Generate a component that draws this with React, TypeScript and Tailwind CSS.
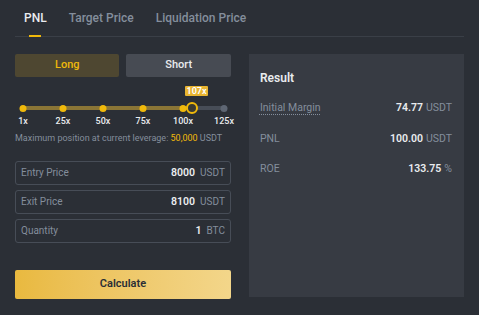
import React from "react";

const marks = [
  { x: 8, label: "1x" },
  { x: 48, label: "25x" },
  { x: 88, label: "50x" },
  { x: 128, label: "75x" },
  { x: 168, label: "100x" },
  { x: 209, label: "125x" },
];

function Field({ label, value, unit }: { label: string; value: string; unit: string }) {
  return (
    <div className="flex h-[24px] items-center rounded-[3px] border border-[#474d57] pl-[5px] pr-[5px] text-[10px]">
      <span className="flex-1 text-[#848e9c]">{label}</span>
      <span className="text-[10.5px] font-semibold text-[#eaecef]">{value}</span>
      <span className="ml-[5px] text-[#848e9c]">{unit}</span>
    </div>
  );
}

function Row({ label, value, unit, dotted }: { label: string; value: string; unit: string; dotted?: boolean }) {
  return (
    <div className="flex h-[30px] items-center text-[10.5px]">
      <span
        className={
          "flex-1 text-[#848e9c] " +
          (dotted ? "underline decoration-dotted decoration-[#848e9c] underline-offset-[3px]" : "")
        }
      >
        {label}
      </span>
      <span className="font-semibold text-[#eaecef]">{value}</span>
      <span className="ml-[3px] text-[#848e9c]">{unit}</span>
    </div>
  );
}

export default function App() {
  return (
    <div
      className="h-[315px] w-[479px] overflow-hidden bg-[#2b2f36] px-[15px]"
      style={{ fontFamily: "Roboto, 'Noto Sans', sans-serif" }}
    >
      <div className="flex h-[37px] items-stretch gap-[22px] border-b border-[#3a3f47] pl-[9px] text-[12px] font-medium">
        <div className="relative flex items-center text-[#eaecef]">
          PNL
          <div className="absolute bottom-[-1px] left-1/2 h-[2px] w-[12px] -translate-x-1/2 bg-[#f0b90b]" />
        </div>
        <div className="flex items-center text-[#848e9c]">Target Price</div>
        <div className="flex items-center text-[#848e9c]">Liquidation Price</div>
      </div>

      <div className="mt-[17px] flex gap-[18px]">
        <div className="flex w-[217px] flex-col">
          <div className="flex gap-[7px] text-[11px] font-medium">
            <div className="flex h-[23px] flex-1 items-center justify-center rounded-[2px] bg-[#4e4731] text-[#f0b90b]">
              Long
            </div>
            <div className="flex h-[23px] flex-1 items-center justify-center rounded-[2px] bg-[#474b53] text-[#eaecef]">
              Short
            </div>
          </div>

          <div className="relative mt-[9px] h-[48px]">
            <div className="absolute left-[170px] top-0 flex h-[10px] w-[23px] items-center justify-center rounded-[1px] bg-[#e9b531] text-[9px] font-semibold leading-none text-white">
              107x
            </div>
            <div className="absolute left-[8px] top-[20px] h-[4px] w-[201px] rounded-full bg-[#474d57]" />
            <div className="absolute left-[8px] top-[20px] h-[4px] w-[169px] bg-[#8a7536]" />
            {marks.map((m, i) => (
              <React.Fragment key={m.label}>
                <div
                  className={
                    "absolute top-[19px] h-[7px] w-[7px] -translate-x-1/2 rounded-full " +
                    (i < 5 ? "bg-[#f0b90b]" : "bg-[#5e6673]")
                  }
                  style={{ left: m.x }}
                />
                <div
                  className="absolute top-[29px] -translate-x-1/2 text-[9px] font-medium text-[#eaecef]"
                  style={{ left: m.x }}
                >
                  {m.label}
                </div>
              </React.Fragment>
            ))}
            <div className="absolute left-[177px] top-[16px] h-[12px] w-[12px] -translate-x-1/2 rounded-full border-2 border-[#f0b90b] bg-[#3a3a32]" />
          </div>

          <div className="mt-[-2px] whitespace-nowrap text-[9px] text-[#848e9c]">
            Maximum position at current leverage: <span className="text-[#f0b90b]">50,000</span> USDT
          </div>

          <div className="mt-[15px] flex flex-col gap-[5px]">
            <Field label="Entry Price" value="8000" unit="USDT" />
            <Field label="Exit Price" value="8100" unit="USDT" />
            <Field label="Quantity" value="1" unit="BTC" />
          </div>

          <div className="mt-[27px] flex h-[29px] items-center justify-center rounded-[2px] bg-gradient-to-r from-[#e9b93f] to-[#f3d68a] text-[11px] font-semibold text-[#2b2f36]">
            Calculate
          </div>
        </div>

        <div className="h-[243px] w-[216px] bg-[#373b43] pl-[11px] pr-[12px] pt-[15px]">
          <div className="mb-[6px] text-[12px] font-semibold text-[#eaecef]">Result</div>
          <Row label="Initial Margin" value="74.77" unit="USDT" dotted />
          <div className="mt-[1px]">
            <Row label="PNL" value="100.00" unit="USDT" />
          </div>
          <Row label="ROE" value="133.75" unit="%" />
        </div>
      </div>
    </div>
  );
}
